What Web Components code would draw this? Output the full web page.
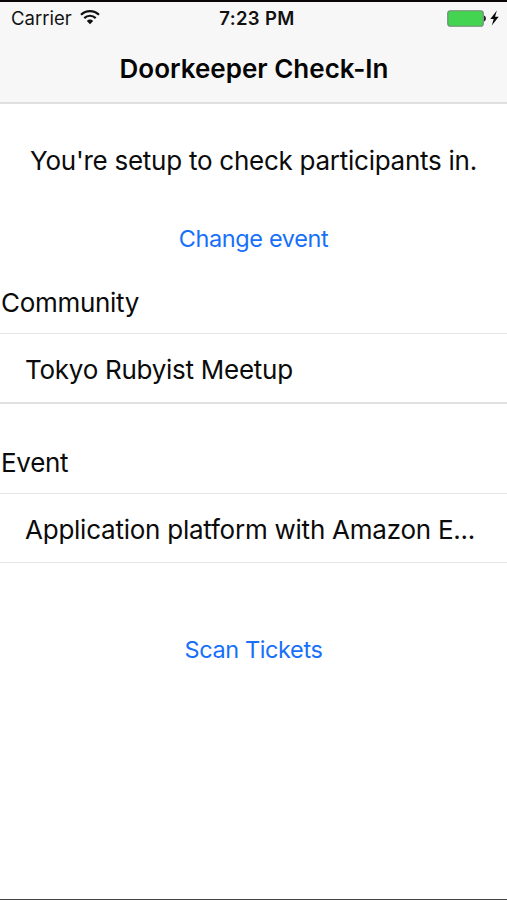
<!DOCTYPE html>
<html lang="en">
<head>
<meta charset="utf-8">
<title>Doorkeeper Check-In</title>
<style>
    body {
        margin: 0;
        background: #fff;
        color: #0b0b0b;
        font-family: Inter, "Liberation Sans", sans-serif;
    }
</style>
</head>
<body>
<check-in-screen>
    <status-bar slot="top" carrier="Carrier" time="7:23 PM"></status-bar>
    <nav-bar slot="top">Doorkeeper Check-In</nav-bar>
    <p class="message">You're setup to check participants in.</p>
    <text-button class="change">Change event</text-button>
    <list-section label="Community" class="community">Tokyo Rubyist Meetup</list-section>
    <list-section label="Event" class="event">Application platform with Amazon E...</list-section>
    <text-button class="scan">Scan Tickets</text-button>
</check-in-screen>

<script>
class CheckInScreen extends HTMLElement {
  constructor() {
    super();
    this.attachShadow({ mode: 'open' }).innerHTML = `
<style>
    :host {
        display: flex;
        flex-direction: column;
        box-sizing: border-box;
        height: 900px;
        overflow: hidden;
        border-top: 2px solid #0a0506;
        border-bottom: 1px solid #444;
    }

    header {
        height: 100px;
        background: #f7f7f7;
        border-bottom: 2px solid #e0e0e0;
    }

    main {
        display: flex;
        flex-direction: column;
    }

    ::slotted(.message) {
        margin: 41px 0 0;
        font-size: 26px;
        line-height: 32px;
        text-align: center;
        white-space: nowrap;
        letter-spacing: -0.26px;
    }

    ::slotted(.change) { margin-top: 46px; }
    ::slotted(.community) { margin-top: 32px; --rule-end: 2px solid #e0e0e0; }
    ::slotted(.event) { margin-top: 43px; --row-spacing: -0.24px; }
    ::slotted(.scan) { margin-top: 71px; }
</style>
<header><slot name="top"></slot></header>
<main><slot></slot></main>
`;
  }
}

class StatusBar extends HTMLElement {
  constructor() {
    super();
    this.attachShadow({ mode: 'open' }).innerHTML = `
<style>
    :host {
        display: grid;
        grid-template-columns: 1fr auto 1fr;
        align-items: center;
        height: 32px;
        padding: 0 8px 0 11px;
        color: #111;
        font-size: 18.5px;
        line-height: 32px;
    }

    .left, .right {
        display: flex;
        align-items: center;
    }

    .left { gap: 8px; }
    .right { justify-content: flex-end; gap: 4px; }
    .time { font-weight: 600; letter-spacing: 0.35px; padding-left: 4px; }
    svg { display: block; }
    .wifi { margin-top: -2px; }
</style>
<div class="left">
    <span class="carrier"></span>
    <svg class="wifi" width="20" height="16" viewBox="0 0 20 16" fill="none" stroke="#111" stroke-width="2.2">
        <path d="M1 5.8a12.7 12.7 0 0 1 18 0"/>
        <path d="M4.3 9.1a8.1 8.1 0 0 1 11.4 0"/>
        <path d="M10 15.2l-3.2-3.3a4.6 4.6 0 0 1 6.4 0z" fill="#111" stroke="none"/>
    </svg>
</div>
<span class="time"></span>
<div class="right">
    <svg width="39" height="17" viewBox="0 0 39 17">
        <rect x=".75" y=".75" width="35.5" height="15.5" rx="2.5" fill="#43d551" stroke="#77897a" stroke-width="1.2"/>
        <path d="M37 5.8h.8c1.5 1.4 1.5 4 0 5.4H37z" fill="#222"/>
    </svg>
    <svg width="9" height="16" viewBox="0 0 9 16" fill="#080808">
        <path d="M6.9.5L.3 9h3.4L1.8 15.5 8.7 6.7H5z"/>
    </svg>
</div>
`;
  }

  connectedCallback() {
    this.shadowRoot.querySelector('.carrier').textContent = this.getAttribute('carrier');
    this.shadowRoot.querySelector('.time').textContent = this.getAttribute('time');
  }
}

class NavBar extends HTMLElement {
  constructor() {
    super();
    this.attachShadow({ mode: 'open' }).innerHTML = `
<style>
    :host {
        display: flex;
        align-items: center;
        justify-content: center;
        height: 68px;
    }

    h1 {
        margin: 0;
        padding: 2px 0 0 1px;
        color: #050505;
        font-size: 26px;
        font-weight: 600;
        line-height: 66px;
        letter-spacing: 0;
    }
</style>
<h1><slot></slot></h1>
`;
  }
}

class TextButton extends HTMLElement {
  constructor() {
    super();
    this.attachShadow({ mode: 'open' }).innerHTML = `
<style>
    :host {
        display: flex;
        justify-content: center;
    }

    button {
        padding: 0;
        border: 0;
        background: none;
        color: #176ffa;
        font: 23.5px/32px Inter, "Liberation Sans", sans-serif;
        letter-spacing: -0.38px;
        cursor: pointer;
    }
</style>
<button><slot></slot></button>
`;
  }
}

class ListSection extends HTMLElement {
  constructor() {
    super();
    this.attachShadow({ mode: 'open' }).innerHTML = `
<style>
    :host {
        display: block;
        font-size: 26px;
        line-height: 32px;
        letter-spacing: -0.3px;
    }

    h2 {
        margin: 0;
        padding: 0 0 14px 1px;
        font-size: inherit;
        font-weight: 400;
    }

    .row {
        height: 68px;
        padding: 0 20px 0 25px;
        border-top: 1px solid #e6e6e6;
        border-bottom: var(--rule-end, 1px solid #e6e6e6);
        letter-spacing: var(--row-spacing, -0.27px);
        line-height: 71px;
        white-space: nowrap;
        overflow: hidden;
        text-overflow: ellipsis;
    }
</style>
<h2></h2>
<div class="row"><slot></slot></div>
`;
  }

  connectedCallback() {
    this.shadowRoot.querySelector('h2').textContent = this.getAttribute('label');
  }
}

customElements.define('status-bar', StatusBar);
customElements.define('nav-bar', NavBar);
customElements.define('text-button', TextButton);
customElements.define('list-section', ListSection);
customElements.define('check-in-screen', CheckInScreen);
</script>
</body>
</html>
